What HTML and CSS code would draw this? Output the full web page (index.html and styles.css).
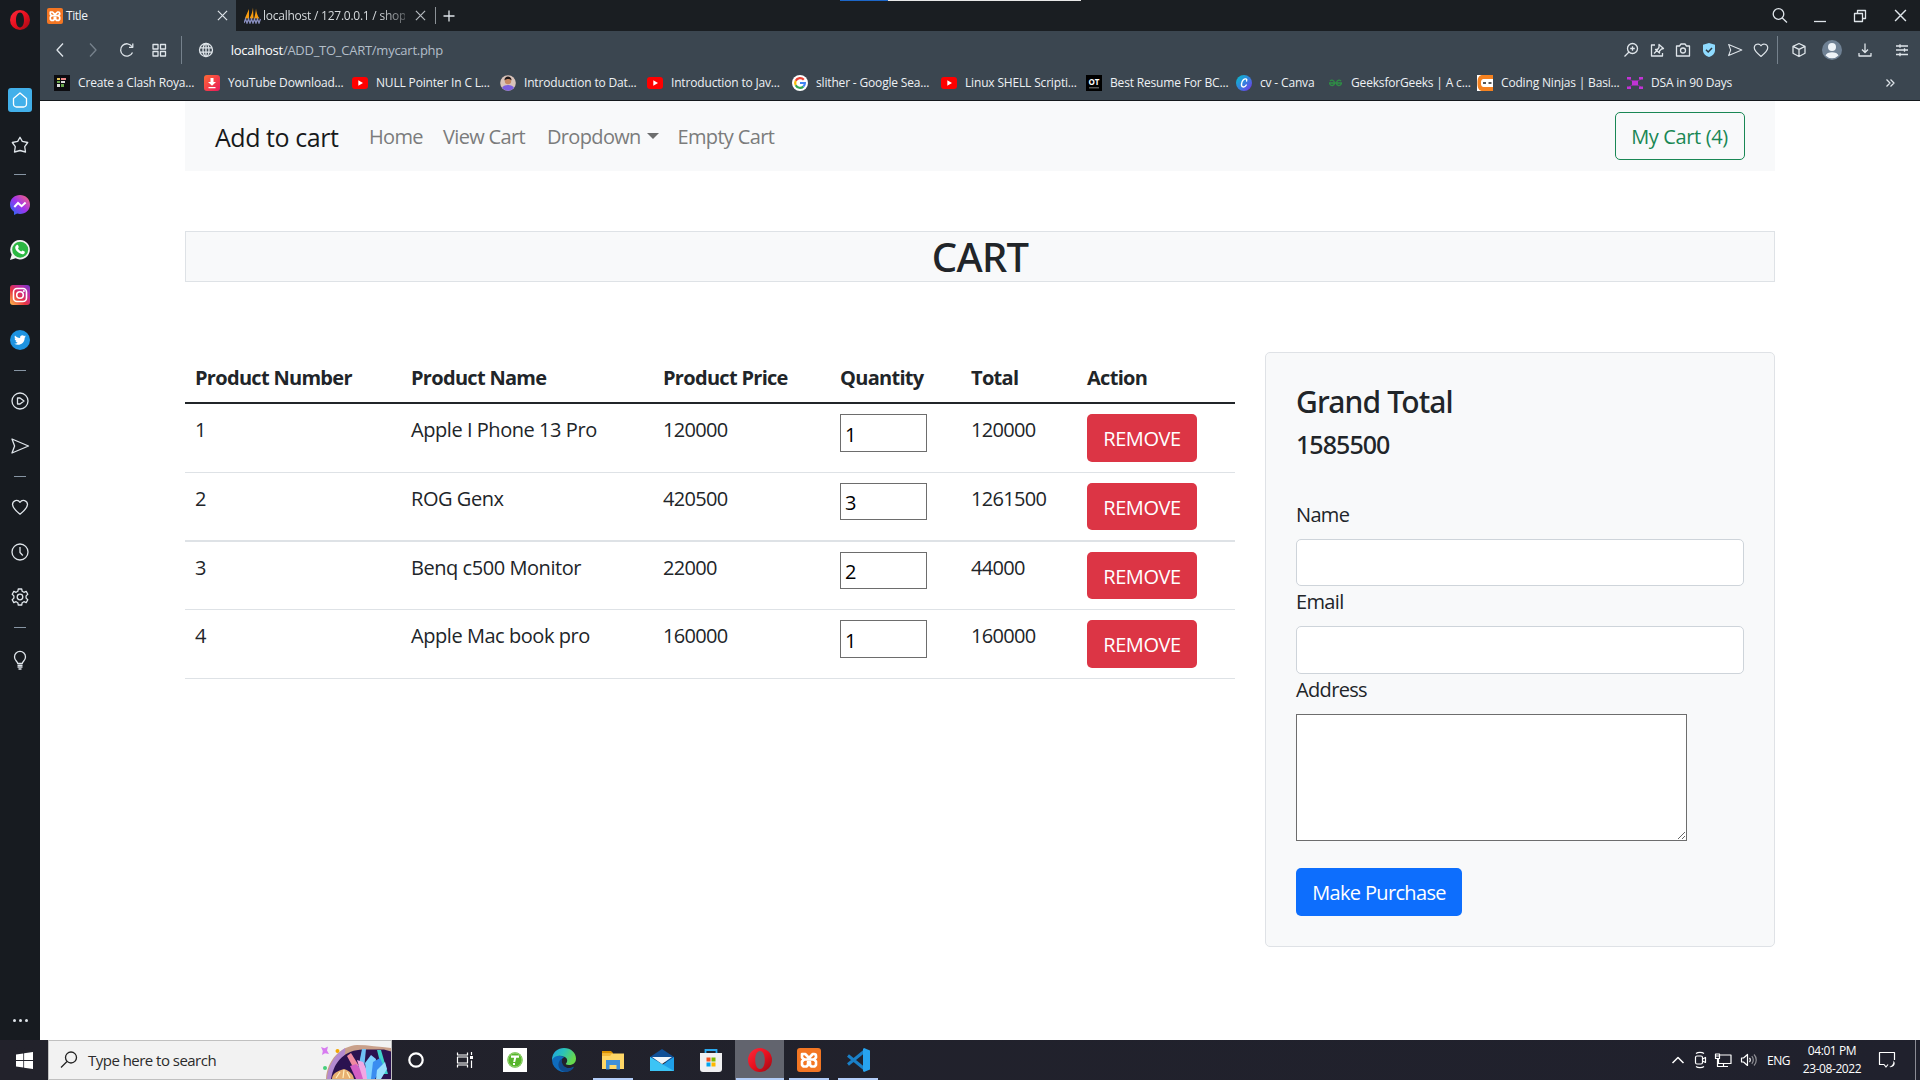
FILE: index.html
```html
<!DOCTYPE html>
<html lang="en">
<head>
<meta charset="utf-8">
<title>Title</title>
<link rel="stylesheet" href="styles.css">
</head>
<body>
<svg class="defs" width="0" height="0" aria-hidden="true">
  <defs>
    <linearGradient id="opg" x1="0" y1="0" x2="1" y2="1"><stop offset="0" stop-color="#ff2a3c"/><stop offset=".5" stop-color="#e8101f"/><stop offset="1" stop-color="#9c0a14"/></linearGradient>
    <linearGradient id="msg" x1="0" y1="1" x2="1" y2="0"><stop offset="0" stop-color="#1673f5"/><stop offset=".5" stop-color="#a033ee"/><stop offset="1" stop-color="#ff6a6f"/></linearGradient>
    <linearGradient id="igg" x1="0" y1="1" x2="1" y2="0"><stop offset="0" stop-color="#fdc04f"/><stop offset=".4" stop-color="#e8353f"/><stop offset=".7" stop-color="#c02c9c"/><stop offset="1" stop-color="#7038d0"/></linearGradient>
    <linearGradient id="cvg" x1="0" y1="0" x2="1" y2="1"><stop offset="0" stop-color="#00c4cc"/><stop offset=".55" stop-color="#3a7be0"/><stop offset="1" stop-color="#7d2ae8"/></linearGradient>
    <linearGradient id="edg" x1="0" y1="0" x2="1" y2=".4"><stop offset="0" stop-color="#1ba0e8"/><stop offset=".5" stop-color="#2bc3b8"/><stop offset="1" stop-color="#67d94c"/></linearGradient>
    <linearGradient id="ytd" x1="0" y1="0" x2="1" y2="1"><stop offset="0" stop-color="#ff6a35"/><stop offset="1" stop-color="#e9175a"/></linearGradient>
    <symbol id="opera" viewBox="0 0 20 20"><path fill="url(#opg)" fill-rule="evenodd" d="M10 0a10 10 0 1 0 0 20a10 10 0 1 0 0-20zM10 2.600c2.500 0 4 3.200 4 7.400s-1.500 7.400-4 7.400s-4-3.200-4-7.400s1.500-7.400 4-7.400z"/></symbol>
    <symbol id="xampp" viewBox="0 0 24 24"><rect width="24" height="24" rx="3" fill="#f37623"/><g fill="none" stroke="#fff" stroke-width="2.600" stroke-linecap="round" stroke-linejoin="round"><path d="M5 6h3.200L12 10l3.800-4H17a2 2 0 0 1 2 2v1.500l-2 2h-4.500M5 6v3.500l2 2h4.500"/><path d="M7 11.500l-2 2V17l1.500 1.500h3L11 17v-3M17 11.500l2 2V17l-1.500 1.500h-3L13 17v-3"/></g></symbol>
    <symbol id="yt" viewBox="0 0 16 16"><rect y="2" width="16" height="12" rx="3" fill="#f00"/><path fill="#fff" d="M6.300 5.300v5.400L11 8z"/></symbol>
    <symbol id="heart" viewBox="0 0 20 20"><path d="M10 17.200C6 14 2.500 11.200 2.500 7.600A4.100 4.100 0 0 1 10 5.300a4.100 4.100 0 0 1 7.500 2.300c0 3.600-3.500 6.400-7.500 9.600z"/></symbol>
    <symbol id="send" viewBox="0 0 20 20"><path d="M2 3l16.500 7L2 17l2.600-7z"/></symbol>
    <symbol id="cross" viewBox="0 0 12 12"><path d="M1 1l10 10M11 1L1 11"/></symbol>
  </defs>
</svg>

<div class="screen">
  <aside class="side">
    <div class="brand"><svg width="20" height="20"><use href="#opera"/></svg></div>
    <div class="slot"><span class="home"><svg class="ln" width="18" height="18" viewBox="0 0 18 18"><path d="M2.500 7.500L9 2l6.500 5.500V13a3 3 0 0 1-3 3h-7a3 3 0 0 1-3-3z"/></svg></span></div>
    <div class="slot"><svg class="ln" width="20" height="20" viewBox="0 0 20 20"><path d="M10 2.200l2.300 4.200 5.400 1.100-3 4.100.8 5.400-5.500-1.500L4.500 17l.8-5.400-3-4.100 5.400-1.100z"/></svg></div>
    <div class="dash"></div>
    <div class="slot"><svg width="20" height="20" viewBox="0 0 20 20"><path fill="url(#msg)" d="M10 0c5.600 0 10 4 10 9.500S15.600 19 10 19c-1 0-2-.1-2.900-.4L4 20v-3.200A9.300 9.300 0 0 1 0 9.500C0 4 4.400 0 10 0z"/><path fill="none" stroke="#fff" stroke-width="2" d="M4.300 12l3.700-4 3.600 3.200L15.600 7.500"/></svg></div>
    <div class="slot"><svg width="20" height="20" viewBox="0 0 20 20"><path fill="#f2f2f2" d="M10.200 0a9.700 9.700 0 1 1-4.600 18.300L0 20l1.700-5.300A9.700 9.700 0 0 1 10.200 0z"/><circle cx="10.200" cy="9.700" r="8" fill="#2cb742"/><path fill="#fff" d="M6.500 5.200c.9-.8 1.500-.3 1.700.4l.6 1.500c0 .5-.7 1-.7 1.300.6 1.400 1.700 2.400 3.200 3 .4 0 .8-1 1.300-1l2 1c.4.300.3 1.700-.6 2.300-1 .8-2.600.7-4.800-.6-2.400-1.500-4-4-4-5.400 0-1 .5-1.900 1.300-2.500z"/></svg></div>
    <div class="slot"><svg width="20" height="20" viewBox="0 0 20 20"><rect width="20" height="20" rx="3" fill="url(#igg)"/><g fill="none" stroke="#fff" stroke-width="1.600"><rect x="3.500" y="3.500" width="13" height="13" rx="3.500"/><circle cx="10" cy="10" r="3.300"/></g><circle cx="13.900" cy="6.100" r="1" fill="#fff"/></svg></div>
    <div class="slot"><svg width="20" height="20" viewBox="0 0 20 20"><circle cx="10" cy="10" r="10" fill="#1d93e0"/><path fill="#fff" d="M16 6.300l-1.300.4.900-1.200-1.500.5c-1.600-1.600-4.400-.4-4 2C7.900 8 6.200 7 5 5.500c-.8 1.300-.3 2.700.7 3.400l-1.100-.3c0 1.200.8 2.100 2 2.500H5.500c.3.900 1.100 1.500 2.200 1.600-1 .8-2.200 1.100-3.500 1 4.500 2.700 10.500.1 10.500-6z"/></svg></div>
    <div class="dash"></div>
    <div class="slot"><svg class="ln" width="20" height="20" viewBox="0 0 20 20"><circle cx="10" cy="10" r="8"/><path d="M7.500 7h2.500l4 3-4 3H7.500z"/></svg></div>
    <div class="slot"><svg class="ln" width="20" height="20"><use href="#send"/></svg></div>
    <div class="dash"></div>
    <div class="slot"><svg class="ln" width="20" height="20"><use href="#heart"/></svg></div>
    <div class="slot"><svg class="ln" width="20" height="20" viewBox="0 0 20 20"><circle cx="10" cy="10" r="8"/><path d="M10 5v5.500l2.800 3"/></svg></div>
    <div class="slot"><svg class="ln" width="20" height="20" viewBox="0 0 20 20"><path d="M8.300 2h3.400l.5 2.300 1.700 1 2.300-.9 1.600 2.900-1.700 1.600v2.200l1.700 1.600-1.600 2.900-2.300-.9-1.700 1-.5 2.300H8.300l-.5-2.300-1.700-1-2.300.9-1.600-2.900 1.700-1.600V8.900L2.200 7.300l1.600-2.900 2.300.9 1.700-1z"/><circle cx="10" cy="10" r="2.800"/></svg></div>
    <div class="dash"></div>
    <div class="slot bulb"><svg class="ln" width="20" height="20" viewBox="0 0 20 20"><path d="M7.700 13.500c0-2-3.200-3-3.200-6.600a5.500 5.500 0 0 1 11 0c0 3.600-3.200 4.600-3.200 6.600zM7.500 15.500h5M7.500 17.200h5M8.500 19h3"/></svg></div>
    <div class="dots"><i></i><i></i><i></i></div>
  </aside>

  <div class="main">
    <div class="tabs">
      <div class="tab active"><svg width="16" height="16"><use href="#xampp"/></svg><span class="tab-title">Title</span><svg class="ln thin" width="11" height="11"><use href="#cross"/></svg></div>
      <div class="tab second"><svg width="17" height="17" viewBox="0 0 17 16"><path fill="#f89c0e" d="M5 1.500L.8 11H5zM9 0C8.500 4 7.500 7.500 5.500 11H9.500zM12 1c-.3 3-.9 7-1.900 10H15.500C13.500 8.500 12.300 4.500 12 1z"/><path fill="none" stroke="#8a8fc0" stroke-width="1.300" d="M0 15.500l1.500-4 1.500 4 1.500-4 1.500 4 1.500-4 1.500 4 1.500-4 1.500 4 1.500-4 1.500 4 1.500-4"/></svg><span class="tab-title fade">localhost / 127.0.0.1 / shop</span><svg class="ln thin dim" width="11" height="11"><use href="#cross"/></svg></div>
      <span class="tab-sep"></span>
      <svg class="ln plus" width="12" height="12" viewBox="0 0 12 12"><path d="M6 .5v11M.5 6h11"/></svg>
      <div class="win">
        <svg class="ln" width="18" height="18" viewBox="0 0 18 18"><circle cx="7.500" cy="7" r="5.300"/><path d="M11.300 11l4.700 4.500"/></svg>
        <svg class="ln" width="14" height="14" viewBox="0 0 14 14"><path d="M1 12.500h12"/></svg>
        <svg class="ln" width="14" height="14" viewBox="0 0 14 14"><path d="M1.500 4.500h8v8h-8zM4.500 4.500v-3h8v8h-3"/></svg>
        <svg class="ln" width="13" height="13"><use href="#cross"/></svg>
      </div>
      <div class="progress"></div>
    </div>

    <div class="toolbar">
      <div class="nav-icons">
        <svg class="ln" width="20" height="20" viewBox="0 0 20 20"><path d="M13 3.500L7 10l6 6.500"/></svg>
        <svg class="ln off" width="20" height="20" viewBox="0 0 20 20"><path d="M7 3.500l6 6.500-6 6.500"/></svg>
        <svg class="ln" width="20" height="20" viewBox="0 0 20 20"><path d="M16.500 12.500A6.200 6.200 0 1 1 16 6.500M16.800 3.500v3.800H13"/></svg>
        <svg class="ln" width="20" height="20" viewBox="0 0 20 20"><path d="M4 4.500h5v4.500H4zM11.500 4.500h5v4.500h-5zM4 11.500h5V16H4zM11.500 11.500h5V16h-5z"/></svg>
      </div>
      <span class="vsep"></span>
      <svg class="ln globe" width="16" height="16" viewBox="0 0 16 16"><circle cx="8" cy="8" r="6.500"/><ellipse cx="8" cy="8" rx="3" ry="6.500"/><path d="M2 5.800h12M2 10.200h12M8 1.500v13"/></svg>
      <span class="url"><b>localhost</b>/ADD_TO_CART/mycart.php</span>
      <div class="tools">
        <svg class="ln" width="16" height="16" viewBox="0 0 16 16"><circle cx="9.500" cy="6.500" r="5"/><path d="M9.500 4.200v4.600M7.200 6.500h4.600M6 10l-4.500 4.500"/></svg>
        <svg class="ln" width="16" height="16" viewBox="0 0 16 16"><path d="M6 3H2.500v11h11v-3M5 11.500l3-3M10 2.500l4.500 4-2 .5-2 2v2L6.500 7.500h2l1.500-2z"/></svg>
        <svg class="ln" width="16" height="16" viewBox="0 0 16 16"><path d="M1.500 4h3l1.500-2h4l1.500 2h3v10h-13z"/><circle cx="8" cy="8.500" r="2.500"/></svg>
        <svg width="16" height="16" viewBox="0 0 16 16"><path fill="#8fdbff" d="M8 1l6 1.800v5.400c0 3.400-2.500 5.600-6 6.800-3.500-1.200-6-3.400-6-6.800V2.800z"/><path fill="none" stroke="#2b3a45" stroke-width="1.500" d="M5 7.800l2.200 2.200L11 6"/></svg>
        <svg class="ln" width="16" height="16"><use href="#send"/></svg>
        <svg class="ln" width="18" height="18"><use href="#heart"/></svg>
      </div>
      <span class="vsep"></span>
      <div class="tools2">
        <svg class="ln" width="16" height="16" viewBox="0 0 16 16"><path d="M8 1.500l6 2.800v7L8 14.500l-6-3.200v-7zM2 4.300l6 3 6-3M8 7.300v7"/></svg>
        <svg width="20" height="20" viewBox="0 0 20 20"><circle cx="10" cy="10" r="10" fill="#6f8194"/><circle cx="10" cy="7" r="4" fill="#eef3f8"/><path fill="#eef3f8" d="M3.500 15.500c1-4.500 12-4.500 13 0a9 9 0 0 1-13 0z"/></svg>
        <svg class="ln" width="16" height="16" viewBox="0 0 16 16"><path d="M8 1.500v9M5 7.500l3 3 3-3M2 11v3h12v-3"/></svg>
        <svg class="ln" width="14" height="14" viewBox="0 0 14 14"><path d="M1 3h12M1 7h12M1 11.500h12M5 1.200v3.600M9.500 5.200v3.600M5 9.700v3.600"/></svg>
      </div>
    </div>

    <div class="bookmarks">
      <a><svg width="16" height="16" viewBox="0 0 16 16"><rect width="16" height="16" fill="#0c0c10"/><path fill="#e6c65a" d="M3 3h3v2H3z"/><path fill="#e88" d="M7 3h5v2H7z"/><path fill="#6aa84f" d="M3 6h3v2H3zM7 9h3v3H7z"/><path fill="#ddd" d="M7 6h4v2H7zM3 9h3v3H3z"/></svg>Create a Clash Roya...</a>
      <a><svg width="16" height="16" viewBox="0 0 16 16"><rect width="16" height="16" rx="3" fill="url(#ytd)"/><path fill="#fff" d="M6.500 3h3v4H12L8 10.800 4 7h2.500zM4.500 12h7v1.300h-7z"/></svg>YouTube Download...</a>
      <a><svg width="16" height="16"><use href="#yt"/></svg>NULL Pointer In C L...</a>
      <a><svg width="16" height="16" viewBox="0 0 16 16"><circle cx="8" cy="8" r="7.800" fill="#d9c3ba"/><path fill="#7c5fe0" d="M2 13c1-4 11-4 12 0a8 8 0 0 1-12 0z"/><circle cx="8" cy="6" r="3.200" fill="#c68863"/><path fill="#221a1a" d="M4.500 5.500C4 0 12 0 11.500 5.500 10.500 3.500 6 3.500 4.500 5.500z"/></svg>Introduction to Dat...</a>
      <a><svg width="16" height="16"><use href="#yt"/></svg>Introduction to Jav...</a>
      <a><svg width="16" height="16" viewBox="0 0 16 16"><circle cx="8" cy="8" r="8" fill="#fff"/><g fill="none" stroke-width="2.200"><path stroke="#ea4335" d="M11.800 4.800A4.900 4.900 0 0 0 3.700 5.800"/><path stroke="#fbbc05" d="M3.700 5.800a4.900 4.900 0 0 0 0 4.400"/><path stroke="#34a853" d="M3.700 10.200a4.900 4.900 0 0 0 7.600 1.400"/><path stroke="#4285f4" d="M11.300 11.600A4.700 4.700 0 0 0 12.900 8H8"/></g></svg>slither - Google Sea...</a>
      <a><svg width="16" height="16"><use href="#yt"/></svg>Linux SHELL Scripti...</a>
      <a><svg width="16" height="16" viewBox="0 0 16 16"><rect width="16" height="16" fill="#000"/><text x="8" y="10" class="ot">OT</text><path fill="#555" d="M3 12h10v1.500H3z"/></svg>Best Resume For BC...</a>
      <a><svg width="16" height="16" viewBox="0 0 16 16"><circle cx="8" cy="8" r="8" fill="url(#cvg)"/><path fill="none" stroke="#fff" stroke-width="1.400" stroke-linecap="round" d="M10.600 6c.8-2-1.400-3-3.200-1.200C5 7.200 4.800 11.500 7 11.900c1.500.2 2.600-.7 3.300-1.900"/></svg>cv - Canva</a>
      <a><svg width="15" height="16" viewBox="0 0 15 16"><path fill="none" stroke="#2f8d46" stroke-width="1.300" d="M1 8h13M2 6C3.500 4.500 6.500 5 6.500 8S2.500 11.500 1.500 8.500M13 6C11.500 4.500 8.500 5 8.500 8s4 3.500 5 .5"/></svg>GeeksforGeeks | A c...</a>
      <a><svg width="16" height="16" viewBox="0 0 16 16"><rect width="16" height="16" fill="#fff"/><path fill="#f58220" d="M16 0v4H7.500C4.500 4 4 5.500 4 8s.5 4 3.500 4H16v4H6c-4 0-5.500-2.500-5.500-8S2 0 6 0z"/><path fill="#222" d="M6 7.300h3v1.500H6zM11.500 7.300h3v1.500h-3z"/></svg>Coding Ninjas | Basi...</a>
      <a><svg width="16" height="16" viewBox="0 0 16 16"><path stroke="#8a2a9c" d="M2 4l12 8M14 4L2 12"/><path fill="#c233d6" d="M0 2h4v2.500H0zM12 2h4v2.500h-4zM5 5.500h6v5H5zM0 11.500h4V14H0zM12 11.500h4V14h-4z"/></svg>DSA in 90 Days</a>
      <svg class="ln more" width="10" height="10" viewBox="0 0 10 10"><path d="M1.500 1.500L5 5 1.500 8.500M5.500 1.500L9 5 5.500 8.500"/></svg>
    </div>

    <div class="page">
      <nav class="navbar">
        <a class="navbar-brand">Add to cart</a>
        <div class="nav-links"><a>Home</a><a>View Cart</a><a>Dropdown<i class="caret"></i></a><a>Empty Cart</a></div>
        <a class="btn btn-outline">My Cart (4)</a>
      </nav>
      <h1 class="cart-title">CART</h1>
      <div class="columns">
        <table class="cart">
          <colgroup><col class="c1"><col class="c2"><col class="c3"><col class="c4"><col class="c5"><col class="c6"></colgroup>
          <thead><tr><th>Product Number</th><th>Product Name</th><th>Product Price</th><th>Quantity</th><th>Total</th><th>Action</th></tr></thead>
          <tbody>
            <tr><td class="num">1</td><td>Apple I Phone 13 Pro</td><td class="num">120000</td><td class="ctl"><input class="qty" value="1"></td><td class="num">120000</td><td class="ctl"><button class="btn btn-danger">REMOVE</button></td></tr>
            <tr class="heavy"><td class="num">2</td><td>ROG Genx</td><td class="num">420500</td><td class="ctl"><input class="qty" value="3"></td><td class="num">1261500</td><td class="ctl"><button class="btn btn-danger">REMOVE</button></td></tr>
            <tr class="short"><td class="num">3</td><td>Benq c500 Monitor</td><td class="num">22000</td><td class="ctl"><input class="qty" value="2"></td><td class="num">44000</td><td class="ctl"><button class="btn btn-danger">REMOVE</button></td></tr>
            <tr><td class="num">4</td><td>Apple Mac book pro</td><td class="num">160000</td><td class="ctl"><input class="qty" value="1"></td><td class="num">160000</td><td class="ctl"><button class="btn btn-danger">REMOVE</button></td></tr>
          </tbody>
        </table>
        <form class="summary">
          <h4>Grand Total</h4>
          <h5>1585500</h5>
          <label>Name</label>
          <input class="field" type="text">
          <label>Email</label>
          <input class="field" type="text">
          <label>Address</label>
          <textarea></textarea>
          <button class="btn btn-primary" type="button">Make Purchase</button>
        </form>
      </div>
    </div>
  </div>

  <footer class="taskbar">
    <div class="start"><svg width="17" height="17" viewBox="0 0 17 17"><path fill="#fff" d="M0 2.400l7.300-1v6.700H0zM8.100 1.300L17 0v8.100H8.100zM0 8.900h7.300v6.700l-7.300-1zM8.100 8.900H17V17l-8.900-1.300z"/></svg></div>
    <div class="search">
      <svg width="18" height="18" viewBox="0 0 18 18"><g fill="none" stroke="#222" stroke-width="1.300"><circle cx="11" cy="6.500" r="5.500"/><path d="M7 10.500l-6 6"/></g></svg>
      <span>Type here to search</span>
      <svg class="art" width="70" height="38" viewBox="0 0 70 38">
        <path fill="#d77cf0" d="M0 6l3.500 1.200L7 5.500 6 9.500 8 13l-4-.8L1 14l.8-4z"/><circle cx="16.500" cy="10" r="2" fill="#f5a800"/><circle cx="4" cy="27" r="2" fill="#46cf7a"/>
        <path fill="#c9a08a" d="M5 38C6 19 20 5 36 4c12 0 22 2 34 3v31z"/>
        <path fill="#b48ad0" d="M6 38C7 24 14 14 24 7c2 8-6 16-10 31z"/>
        <path fill="#2b1250" d="M10 38C13 20 24 9 42 8.500h21l7 2V38z"/>
        <path fill="#f08aa0" d="M26 15l4-3 8 13-5 3z"/><path fill="#6fc0f5" d="M41 8h4l-2 20h-6z"/><path fill="#3fd0c8" d="M56 9h4l7 24h-5z"/>
        <path fill="#d45fc4" d="M29 25l6-2 15 15H35z"/><path fill="#f2a8e4" d="M36 19l6 2 8 17h-8z"/><path fill="#7fd2ff" d="M44 22l6-8 5 4-2 20h-7z"/><path fill="#3a8df0" d="M52 21l7-4 3 7-8 14h-4z"/><path fill="#9adfff" d="M56 29l8-8 2 7-6 10h-5z"/>
        <path fill="#e8b070" d="M11 38c0-6 6-8 12-10 6 2 9 5 10 10z"/><path fill="none" stroke="#fff0c0" stroke-width="1.200" d="M15 37l4-6M22 37l1-8M29 37l-3-6"/>
      </svg>
    </div>
    <div class="apps">
      <div class="app"><svg width="18" height="18" viewBox="0 0 18 18"><circle cx="9" cy="9" r="6.700" fill="none" stroke="#fff" stroke-width="2.200"/></svg></div>
      <div class="app"><svg class="ln wh" width="18" height="18" viewBox="0 0 18 18"><path d="M1.500 1.500v2.500h10V1.500M1.500 16.500V14h10v2.500M1.500 6h10v6h-10zM15.500 1v3M15.500 9.500V17"/><path fill="#fff" stroke="none" d="M14 5h3v3h-3z"/></svg></div>
      <div class="app"><svg width="24" height="24" viewBox="0 0 24 24"><rect width="24" height="24" fill="#fff"/><circle cx="12" cy="12" r="7.700" fill="#58b52c"/><circle cx="12" cy="12" r="7" fill="none" stroke="#9bd67c"/><path fill="#fff" d="M8 7.500h8v2.200h-2.800l-1 4.300h-2l1-4.300H8zM10 15h2v2h-2z"/></svg></div>
      <div class="app"><svg width="24" height="24" viewBox="0 0 24 24"><path fill="#0f6cbd" d="M0 12C1 5 7 8 14 9c-4 0-6 4-4 7.500 2.500 4.200 8 4.700 12 2A12 12 0 0 1 0 12z"/><path fill="#114a8b" d="M8 12c-4 6 0 11.500 5.500 12 3.500 0 7-2 8.800-5-4 2.200-8.800 1.500-11.300-2A7 7 0 0 1 10 11z"/><path fill="url(#edg)" d="M0 12C0 4 6 0 12 0c7 0 12 5 12 10.500 0 5-4 6.500-7 6.500-2.500 0-3.700-.8-3-1.500 2-2 1.500-5-1-6.500C8 6.500 2 7.500 0 12z"/></svg></div>
      <div class="app run"><svg width="24" height="24" viewBox="0 0 24 24"><path fill="#d99000" d="M1 3h9l2 2v4H1z"/><path fill="#ffd766" d="M1 5.500h22V21H1z"/><path fill="#f4b93a" d="M1 5.500h10L9 8H1z"/><path fill="#3f8fd8" d="M5 12h14v9.500h-3.500V17h-7v4.500H5z"/></svg></div>
      <div class="app"><svg width="24" height="24" viewBox="0 0 24 24"><path fill="#0f4f96" d="M0 9L12 1l12 8v5H0z"/><path fill="#1f9fe8" d="M0 9l12 8L24 9v14H0z"/><path fill="#3cc4f5" d="M0 9l24 14H0z"/><path fill="#f1f6fa" d="M2 9h20L12 16z"/></svg></div>
      <div class="app"><svg width="24" height="24" viewBox="0 0 24 24"><path fill="none" stroke="#2aa9f0" stroke-width="1.800" d="M6.500 6V2h11v4"/><path fill="#f0f0f2" d="M1 5h22v16a3 3 0 0 1-3 3H4a3 3 0 0 1-3-3z"/><path fill="#f25022" d="M7.500 9.500h4v4h-4z"/><path fill="#7fba00" d="M12.500 9.500h4v4h-4z"/><path fill="#00a4ef" d="M7.500 14.500h4v4h-4z"/><path fill="#ffb900" d="M12.500 14.500h4v4h-4z"/></svg></div>
      <div class="app run current"><svg width="24" height="24"><use href="#opera"/></svg></div>
      <div class="app run"><svg width="24" height="24"><use href="#xampp"/></svg></div>
      <div class="app run"><svg width="24" height="24" viewBox="0 0 24 24"><path fill="none" stroke="#1a80c8" stroke-width="3" stroke-linejoin="round" d="M18 3.500L2 16.500M2 7.500l16 13"/><path fill="#27a3ef" d="M18 0l6 2.500v19L18 24l-1-1V1z"/></svg></div>
    </div>
    <div class="tray">
      <svg class="ln wh" width="14" height="14" viewBox="0 0 14 14"><path stroke-width="1.500" d="M1.500 10L7 4.500l5.500 5.500"/></svg>
      <svg class="ln wh" width="14" height="18" viewBox="0 0 14 18"><rect x="2.500" y="5" width="7" height="8" rx="1.500"/><path d="M9.500 8l3-1.500v5l-3-1.500M3 2.500c2-1.500 6-1.500 8 0M3 15.500c2 1.500 6 1.500 8 0"/></svg>
      <svg class="ln wh" width="18" height="16" viewBox="0 0 18 16"><path d="M6 3h11v8.500H4.500V7M9.500 12v2.500M6 14.500h8M1.500 2h4v4.500h-4zM3.500 6.500v8H6M1.500 4h4"/></svg>
      <svg class="ln wh" width="18" height="16" viewBox="0 0 18 16"><path d="M1.500 6h2l4-3.500v11l-4-3.500h-2zM9.500 6c1 1 1 3 0 4"/><path opacity=".5" d="M11.800 4.200c2 2 2 5.600 0 7.600M14 2.500c3 3 3 8 0 11"/></svg>
      <span class="lang">ENG</span>
      <div class="clock"><span>04:01 PM</span><span>23-08-2022</span></div>
      <svg class="ln wh" width="18" height="18" viewBox="0 0 18 18"><path d="M10 13.500L8 16l-2-2.500H1.500v-12h15V9"/><path fill="#fff" stroke="none" d="M15.500 9.500c2.800 3 .5 7.500-4.500 6.500 2.500-.5 4.500-2.500 4.500-6.500z"/></svg>
      <span class="edge"></span>
    </div>
  </footer>
</div>
</body>
</html>
```
FILE: styles.css
```css
* { box-sizing: border-box; }
body { margin: 0; font-family: "Open Sans", "Noto Sans", sans-serif; letter-spacing: -0.028em; background: #fff; overflow: hidden; }
input, button, textarea { font: inherit; letter-spacing: inherit; margin: 0; }
svg { display: block; flex: none; }
.defs { position: absolute; }
.ln { fill: none; stroke: #dfe5ea; stroke-width: 1.300; stroke-linejoin: round; }
.wh { stroke: #fff; stroke-width: 1.200; }

.screen { display: grid; grid-template-columns: 40px 1fr; grid-template-rows: 1040px 40px; width: 1920px; height: 1080px; }

/* browser side panel */
.side { background: #171b20; display: flex; flex-direction: column; align-items: center; }
.brand { height: 77px; padding-top: 10px; }
.slot { height: 45px; flex: none; display: flex; align-items: center; }
.bulb { height: 49px; }
.home { width: 24px; height: 24px; border-radius: 3px; background: #42b0ea; display: flex; align-items: center; justify-content: center; }
.home .ln { stroke: #fff; }
.dash { width: 12px; height: 1px; background: #8795a3; margin: 7px 0 7.5px; flex: none; }
.slot + .dash { margin-top: 7.3px; }
.dots { display: flex; gap: 3px; margin-top: auto; padding-bottom: 18px; }
.dots i { width: 3px; height: 3px; border-radius: 50%; background: #dfe5ea; }

.main { display: grid; grid-template-rows: 31px 38px 32px 1fr; min-width: 0; }

/* tab strip */
.tabs { position: relative; display: flex; align-items: center; background: #1a1e22; color: #f2f4f6; font-size: 12px; }
.tab { display: flex; align-items: center; height: 31px; }
.active { width: 196px; background: #3b4650; padding: 0 8px 0 7px; gap: 3px; }
.active .ln { margin-left: auto; }
.second { width: 199px; padding: 0 9px 0 8px; gap: 2px; color: #d5d9dc; letter-spacing: -0.02em; }
.second .ln { margin-left: auto; }
.dim { stroke: #b5babf; }
.fade { width: 142px; white-space: nowrap; overflow: hidden; -webkit-mask-image: linear-gradient(90deg, #000 82%, rgba(0,0,0,.35)); mask-image: linear-gradient(90deg, #000 82%, rgba(0,0,0,.35)); }
.tab-sep { width: 1px; height: 17px; background: #8c9297; }
.plus { margin-left: 7px; }
.win { margin-left: auto; display: grid; grid-template-columns: repeat(4, 40px); justify-items: center; align-items: center; }
.progress { position: absolute; left: 800px; top: 0; width: 241px; height: 1px; background: linear-gradient(90deg, #1c66c8 48px, #e8e8e8 48px); }

/* address bar */
.toolbar { display: flex; align-items: center; background: #3b4650; }
.nav-icons { display: grid; grid-template-columns: repeat(4, 33.2px); justify-items: center; padding-left: 3px; }
.off { stroke: #77828c; }
.vsep { width: 1px; height: 28px; background: #75818c; }
.nav-icons + .vsep { margin-left: 5px; }
.globe { margin-left: 16px; }
.url { margin-left: 17px; font-size: 13px; color: #b3bec9; letter-spacing: -0.02em; }
.url b { font-weight: 400; color: #fff; }
.tools { margin-left: auto; display: grid; grid-template-columns: repeat(6, 26px); justify-items: center; align-items: center; padding-right: 3px; }
.tools2 { display: grid; grid-template-columns: 42px 24px 41px 34px; justify-items: center; align-items: center; padding-right: 1px; }

/* bookmarks bar */
.bookmarks { display: grid; grid-template-columns: 150px 148px 148px 147px 145px 149px 145px 150px 92px 149px 150px 1fr 35px; align-items: center; padding: 0 0 4px 14px; background: #3b4650; border-bottom: 1px solid #14181c; color: #eef1f4; font-size: 12px; letter-spacing: -0.014em; }
.bookmarks a { display: flex; align-items: center; gap: 8px; white-space: nowrap; }
.ot { font: 700 8px "Open Sans", sans-serif; fill: #fff; text-anchor: middle; letter-spacing: 0; }

/* shop page */
.page { padding: 0 145px; color: #212529; font-size: 20px; line-height: 30px; }
.navbar { display: flex; align-items: center; height: 70px; padding: 0 30px; background: #f8f9fa; }
.navbar-brand { width: 154px; font-size: 25px; color: #17191b; letter-spacing: -0.018em; padding-top: 1px; }
.nav-links { display: grid; grid-template-columns: 74px 104px 130.5px auto; padding-top: 2px; color: #7b7c7c; letter-spacing: -0.033em; }
.caret { display: inline-block; margin-left: 6px; vertical-align: 5px; border-top: 6px solid #6d6e6e; border-left: 6px solid transparent; border-right: 6px solid transparent; }
.btn { display: inline-block; height: 48px; padding: 9px 15px 7px; border: 1px solid transparent; border-radius: 5px; white-space: nowrap; text-align: center; }
.btn-outline { width: 130px; margin-left: auto; padding-left: 14px; color: #198754; border-color: #198754; letter-spacing: -0.018em; }
.cart-title { margin: 60px 0 0; height: 51px; border: 1px solid #dee2e6; background: #f8f9fa; text-align: center; font: 500 40px/50px "Noto Sans", sans-serif; letter-spacing: -0.018em; }
.columns { display: flex; justify-content: space-between; align-items: flex-start; padding-top: 70px; }

.cart { width: 1050px; table-layout: fixed; border-spacing: 0; }
.c1 { width: 216px; } .c2 { width: 252px; } .c3 { width: 177px; } .c4 { width: 131px; } .c5 { width: 116px; } .c6 { width: 158px; }
.cart th { height: 52px; padding: 1px 10px 0; text-align: left; font-weight: 700; border-bottom: 2px solid #212529; letter-spacing: -0.035em; }
.cart td { height: 69px; padding: 11px 10px 0; vertical-align: top; border-bottom: 1px solid #dee2e6; }
.cart td.ctl { padding-top: 10px; }
.cart td.num { letter-spacing: -0.035em; }
.cart .heavy td { border-bottom-width: 2px; }
.cart .short td { height: 68px; }
.short .btn, .heavy .btn { height: 47px; }
.qty { display: block; width: 87px; height: 38px; padding: 2px 5px 0 4px; border: 1px solid #6d6d6d; border-radius: 0; color: #000; line-height: 30px; }
.short .qty, .heavy .qty { height: 37px; }
.cart .btn-danger { display: block; width: 110px; padding: 9px 0 7px; background: #dc3545; color: #fff; }

.summary { width: 510px; height: 595px; padding: 29px 30px 0; border: 1px solid #dfe2e6; border-radius: 5px; background: #f8f9fa; }
.summary h4, .summary h5 { margin: 0; font-family: "Noto Sans", sans-serif; font-weight: 500; }
.summary h4 { font-size: 30px; line-height: 40px; letter-spacing: -0.028em; }
.summary h5 { font-size: 25px; line-height: 30px; margin: 7px 0 40px; letter-spacing: -0.038em; }
.summary label { display: block; height: 40px; line-height: 30px; padding-top: 1px; letter-spacing: -0.033em; }
.field { display: block; width: 448px; height: 47px; border: 1px solid #ced4da; border-radius: 5px; background: #fff; }
.field ~ .field { height: 48px; }
.summary textarea { display: block; width: 391px; height: 127px; border: 1px solid #6d6d6d; border-radius: 0; background: #fff; margin-bottom: 27px; }
.btn-primary { width: 166px; padding: 9px 0 7px; background: #0d6efd; color: #fff; letter-spacing: -0.033em; }

/* desktop taskbar */
.taskbar { grid-column: 1 / 3; display: flex; background: linear-gradient(90deg, #22222b, #20212d); color: #fff; }
.start { width: 48px; display: flex; align-items: center; justify-content: center; }
.search { position: relative; width: 344px; display: flex; align-items: center; padding-left: 11px; gap: 10px; background: #f2f2f2; border: 1px solid #c0c0c0; color: #2b2b2b; font-size: 15px; letter-spacing: -0.035em; }
.art { position: absolute; right: 0; bottom: 0; }
.apps { display: flex; }
.app { width: 49px; display: flex; align-items: center; justify-content: center; }
.app:nth-child(-n+2) { padding-right: 2px; }
.run { background: linear-gradient(#b3cdf8, #b3cdf8) 50% 100% / 40px 2px no-repeat; }
.current { background: linear-gradient(#b3cdf8, #b3cdf8) 50% 100% / 48px 2px no-repeat, #62646e; }
.tray { margin-left: auto; display: flex; align-items: center; font-size: 12px; }
.tray > svg { margin-right: 8px; }
.tray > svg:nth-child(2) { margin-right: 7px; }
.lang { width: 24px; margin: 0 10px 0 1px; letter-spacing: -0.04em; }
.clock { width: 62px; margin-right: 15px; display: flex; flex-direction: column; line-height: 18px; text-align: center; letter-spacing: -0.035em; }
.tray .edge { width: 1px; height: 40px; margin: 0 4px 0 11px; background: #8b8b94; }
```
